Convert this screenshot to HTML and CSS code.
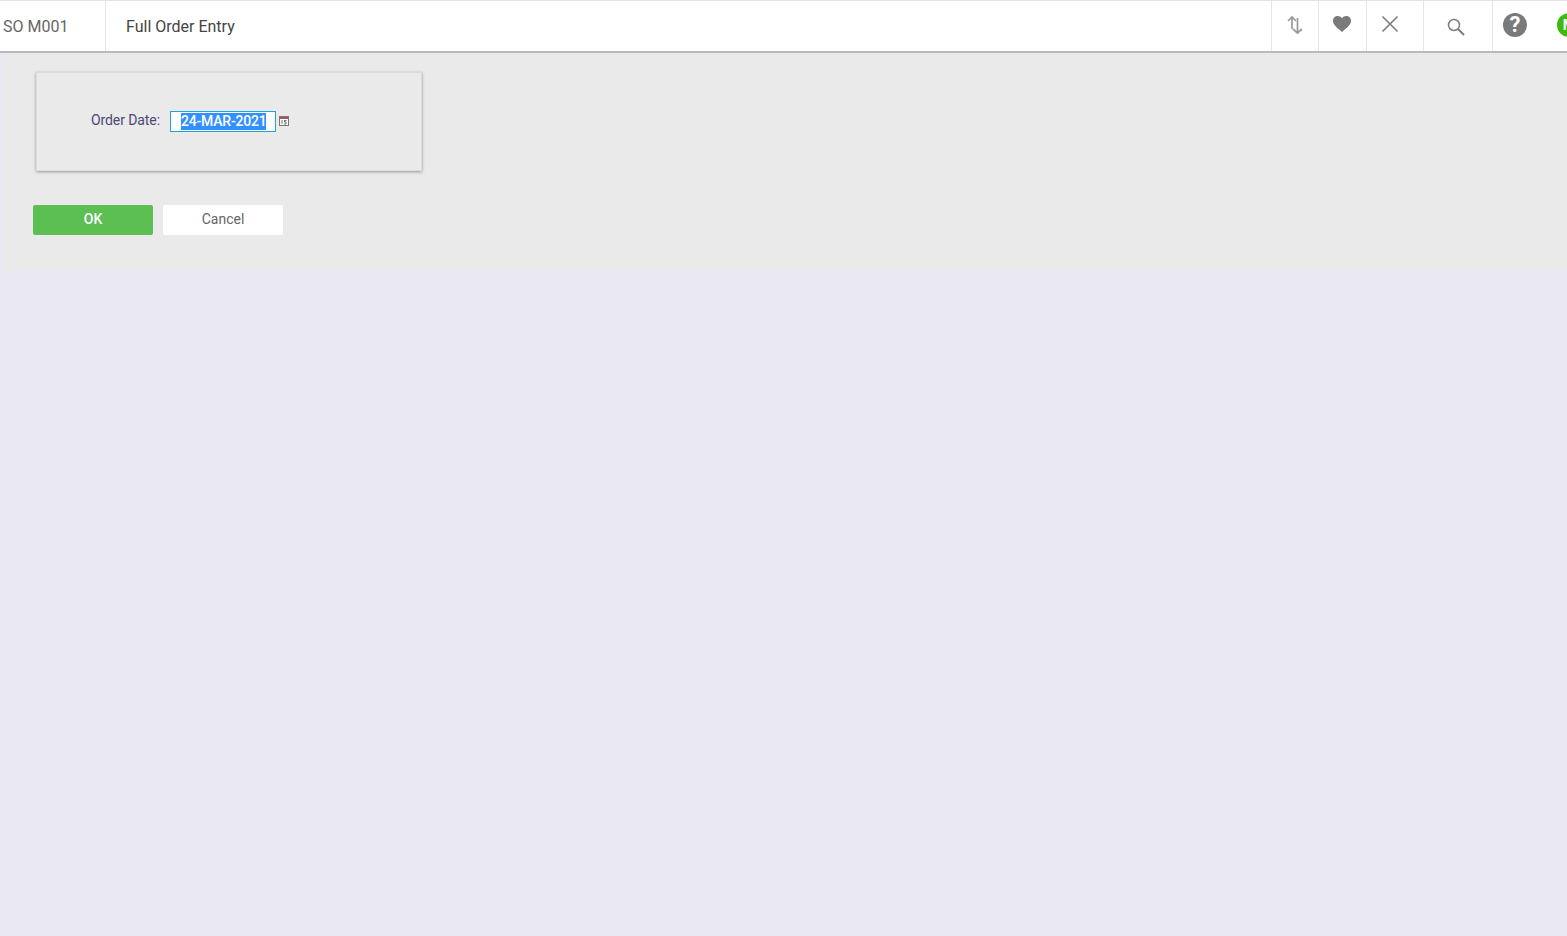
FILE: index.html
```html
<!DOCTYPE html>
<html lang="en">
<head>
  <meta charset="UTF-8">
  <title>Full Order Entry</title>
  <link rel="stylesheet" href="styles.css">
</head>
<body>
  <header class="topbar">
    <div class="app-code">SO M001</div>
    <div class="app-title">Full Order Entry</div>
    <div class="tool tool-sort">
      <svg width="16" height="20" viewBox="0 0 16 20" fill="none" stroke="#999" stroke-width="1.7">
        <path d="M5 14V2M1 6l4-4 4 4"/>
        <path d="M10.500 3v15M6 14l4.500 4 4.500-4"/>
      </svg>
    </div>
    <div class="tool tool-fav">
      <svg width="18" height="16" viewBox="0 0 18 16" fill="#7a7a7a">
        <path d="M9 16C3.500 11.500 0 8.600 0 4.800 0 2 2.100 0 4.700 0 6.400 0 8 .8 9 2.200 10 .8 11.600 0 13.300 0 15.900 0 18 2 18 4.800 18 8.600 14.500 11.500 9 16z"/>
      </svg>
    </div>
    <div class="tool tool-close">
      <svg width="18" height="18" viewBox="0 0 18 18" fill="none" stroke="#7d7d7d" stroke-width="1.6">
        <path d="M1.500 1.500l15 15M16.500 1.500l-15 15"/>
      </svg>
    </div>
    <div class="tool tool-search">
      <svg width="18" height="18" viewBox="0 0 18 18" fill="none" stroke="#7d7d7d">
        <circle cx="7" cy="7" r="5.500" stroke-width="1.500"/>
        <path d="M11 11l6 6" stroke-width="2"/>
      </svg>
    </div>
    <div class="tool tool-help">
      <div class="help-icon">?</div>
    </div>
    <div class="avatar">M</div>
  </header>

  <main class="panel">
    <section class="card">
      <label class="field-label">Order Date:</label>
      <div class="date-input"><span class="date-value">24-MAR-2021</span></div>
      <svg class="cal-icon" width="10" height="10" viewBox="0 0 10 10">
        <rect x="0.500" y="0.500" width="9" height="9" fill="#fff" stroke="#777"/>
        <rect x="1" y="1" width="8" height="2" fill="#a8545a"/>
        <path d="M3 4v4M5 4.500h2.500M5.500 4.500v1.500h1.500v2h-2" fill="none" stroke="#666" stroke-width="0.9"/>
      </svg>
    </section>
    <div class="actions">
      <button class="btn btn-ok">OK</button>
      <button class="btn btn-cancel">Cancel</button>
    </div>
  </main>
</body>
</html>
```

FILE: styles.css
```css
html, body {
  height: 100%;
}
body {
  margin: 0;
  background-color: #e9e8f3;
  font-family: Roboto, Arial, sans-serif;
  overflow: hidden;
}
.topbar {
  display: flex;
  height: 50px;
  background-color: #fff;
  border-top: 1px solid #e4e4e4;
  border-bottom: 2px solid #b9b9bd;
  overflow: hidden;
}
.app-code {
  width: 102px;
  padding-left: 3px;
  border-right: 1px solid #e6e6e6;
  color: #666;
  font-size: 16px;
  line-height: 51px;
}
.app-title {
  flex: 1;
  padding-left: 20px;
  color: #444;
  font-size: 16px;
  line-height: 51px;
}
.tool {
  display: flex;
  justify-content: center;
  align-items: flex-start;
  box-sizing: border-box;
  border-left: 1px solid #e6e6e6;
}
.tool-sort {
  width: 47px;
  padding-top: 14px;
}
.tool-fav {
  width: 48px;
  padding: 15px 2px 0 0;
}
.tool-close {
  width: 57px;
  padding: 14px 11px 0 0;
}
.tool-search {
  width: 69px;
  padding: 17px 5px 0 0;
}
.tool-help {
  width: 65px;
  padding: 12px 20px 0 0;
}
.help-icon {
  width: 24px;
  height: 24px;
  border-radius: 50%;
  background-color: #7a7a7a;
  color: #fff;
  font-size: 22px;
  font-weight: 700;
  line-height: 24px;
  text-align: center;
}
.avatar {
  flex: none;
  width: 24px;
  height: 24px;
  margin: 12px -14px 0 0;
  border-radius: 50%;
  background-color: #3cbb0c;
  color: #fff;
  font-size: 14px;
  font-weight: 700;
  line-height: 24px;
  text-align: center;
}
.panel {
  height: 217px;
  margin-left: 3px;
  padding: 19px 0 0 30px;
  box-sizing: border-box;
  background-color: #eaeaea;
}
.card {
  display: flex;
  align-items: center;
  width: 386px;
  height: 99px;
  margin-left: 3px;
  box-sizing: border-box;
  padding-left: 53px;
  background-color: #eaeaea;
  border: 1px solid #dcdcdc;
  box-shadow: 0 1px 3px rgba(0, 0, 0, 0.35);
}
.field-label {
  width: 70px;
  margin: -3px 10px 0 0;
  color: #4d4878;
  font-size: 14px;
  letter-spacing: -0.08px;
  text-align: right;
}
.date-input {
  width: 106px;
  height: 21px;
  box-sizing: border-box;
  padding-left: 10px;
  background-color: #fff;
  border: 1px solid #1ba5dd;
  font-size: 14px;
  line-height: 17px;
}
.date-value {
  display: block;
  width: 85px;
  margin-top: 1px;
  background-color: #3390ff;
  color: #fff;
  font-weight: 500;
  letter-spacing: -0.2px;
  white-space: nowrap;
}
.cal-icon {
  margin: -2px 0 0 3px;
}
.actions {
  display: flex;
  gap: 10px;
  margin-top: 34px;
}
.btn {
  width: 120px;
  height: 30px;
  padding: 0 0 2px;
  border: none;
  border-radius: 2px;
  font-family: inherit;
  font-size: 14px;
  cursor: pointer;
}
.btn-ok {
  background-color: #5bbf52;
  color: #fff;
  font-weight: 500;
}
.btn-cancel {
  background-color: #fff;
  color: #666;
}
```
